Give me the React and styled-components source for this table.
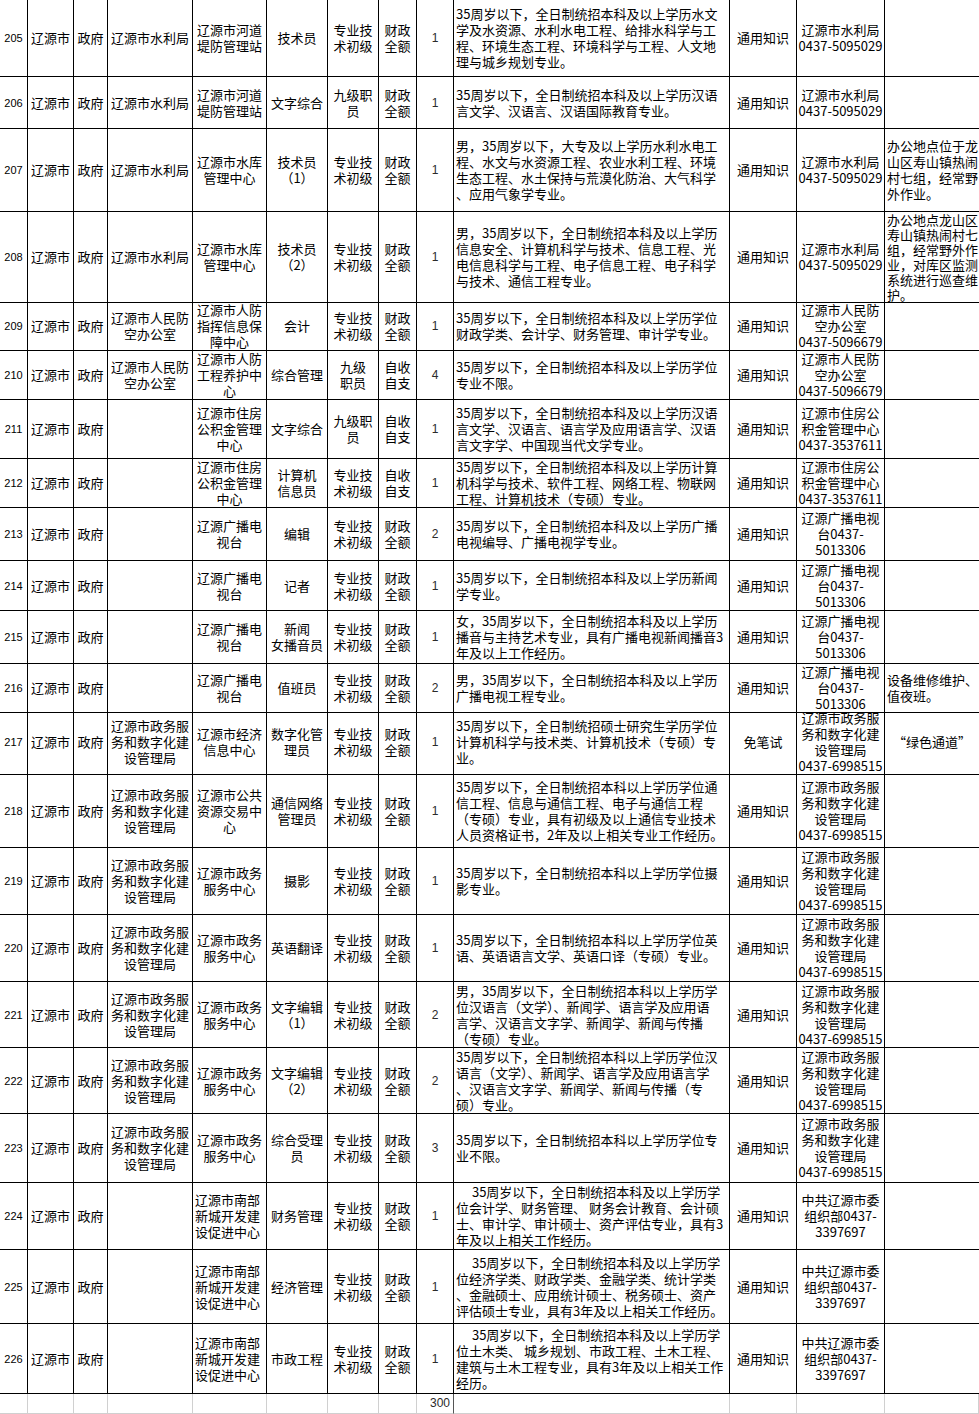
import React from 'react';
import styled, { createGlobalStyle } from 'styled-components';

const GlobalStyle = createGlobalStyle`
  html, body { margin: 0; padding: 0; background: #fff; }
  body { font-family: "Noto Sans CJK SC", sans-serif; color: #000; }
`;

const COLS = '28px 46px 34px 85px 74px 61px 51px 38px 37px 276px 67px 88px 1fr';

const Sheet = styled.div`
  width: 979px;
  overflow: hidden;
  background: #fff;
`;

const Row = styled.div`
  display: grid;
  grid-template-columns: ${COLS};
  height: ${(p) => p.$h}px;
`;

const Cell = styled.div`
  display: flex;
  flex-direction: column;
  justify-content: center;
  align-items: ${(p) => (p.$left ? 'flex-start' : 'center')};
  text-align: ${(p) => (p.$left ? 'left' : 'center')};
  padding: 0 ${(p) => (p.$left ? '0 0 2px' : '0')};
  padding-left: ${(p) => (p.$left ? 2 : 0)}px;
  border-right: ${(p) => (p.$last ? 'none' : '1px solid #000')};
  border-bottom: 1px solid #000;
  font-size: 13px;
  line-height: ${(p) => p.$lh || 16}px;
  white-space: nowrap;
  min-width: 0;
  overflow: visible;
  box-sizing: border-box;
`;

const IndexCell = styled(Cell)`
  font-family: "Liberation Sans", sans-serif;
  font-size: 11px;
`;

const CountCell = styled(Cell)`
  font-family: "Liberation Sans", sans-serif;
  font-size: 12px;
  color: #2a2a2a;
`;

const Line = styled.span`
  display: block;
`;

const FooterRow = styled.div`
  display: grid;
  grid-template-columns: ${COLS};
  height: 20px;
`;

const FooterCell = styled.div`
  border-right: 1px solid ${(p) => (p.$dark ? '#555' : '#d0d0d0')};
  border-bottom: 1px solid #d0d0d0;
  box-sizing: border-box;
  font-family: "Liberation Sans", sans-serif;
  font-size: 12px;
  line-height: 19px;
  color: #2a2a2a;
  text-align: right;
  padding-right: 3px;
`;

const WATER = '辽源市水利局';
const RF = '辽源市人民防|空办公室';
const ZW = '辽源市政务服|务和数字化建|设管理局';
const ZWC = '辽源市政务服|务和数字化建|设管理局|0437-6998515';
const TECH = '专业技|术初级';
const CZ = '财政|全额';
const ZS = '自收|自支';
const TY = '通用知识';
const GB = '辽源广播电|视台';
const GBC = '辽源广播电视|台0437-|5013306';
const ZF = '辽源市住房|公积金管理|中心';
const ZFC = '辽源市住房公|积金管理中心|0437-3537611';
const ZWZX = '辽源市政务|服务中心';
const NB = '辽源市南部|新城开发建|设促进中心';
const ZG = '中共辽源市委|组织部0437-|3397697';

const rows = [
  {
    n: '205', h: 77, dept: WATER, unit: '辽源市河道|堤防管理站', pos: '技术员', type: TECH, fund: CZ, cnt: '1',
    req: ['35周岁以下，全日制统招本科及以上学历水文', '学及水资源、水利水电工程、给排水科学与工', '程、环境生态工程、环境科学与工程、人文地', '理与城乡规划专业。'],
    exam: TY, contact: '辽源市水利局|0437-5095029', note: '',
  },
  {
    n: '206', h: 52, dept: WATER, unit: '辽源市河道|堤防管理站', pos: '文字综合', type: '九级职|员', fund: CZ, cnt: '1',
    req: ['35周岁以下，全日制统招本科及以上学历汉语', '言文学、汉语言、汉语国际教育专业。'],
    exam: TY, contact: '辽源市水利局|0437-5095029', note: '',
  },
  {
    n: '207', h: 83, dept: WATER, unit: '辽源市水库|管理中心', pos: '技术员|（1）', type: TECH, fund: CZ, cnt: '1',
    req: ['男，35周岁以下，大专及以上学历水利水电工', '程、水文与水资源工程、农业水利工程、环境', '生态工程、水土保持与荒漠化防治、大气科学', '、应用气象学专业。'],
    exam: TY, contact: '辽源市水利局|0437-5095029', note: '办公地点位于龙|山区寿山镇热闹|村七组，经常野|外作业。',
  },
  {
    n: '208', h: 90, dept: WATER, unit: '辽源市水库|管理中心', pos: '技术员|（2）', type: TECH, fund: CZ, cnt: '1',
    req: ['男，35周岁以下，全日制统招本科及以上学历', '信息安全、计算机科学与技术、信息工程、光', '电信息科学与工程、电子信息工程、电子科学', '与技术、通信工程专业。'],
    exam: TY, contact: '辽源市水利局|0437-5095029', note: '办公地点龙山区|寿山镇热闹村七|组，经常野外作|业，对库区监测|系统进行巡查维|护。', noteLh: 15,
  },
  {
    n: '209', h: 49, dept: RF, unit: '辽源市人防|指挥信息保|障中心', pos: '会计', type: TECH, fund: CZ, cnt: '1',
    req: ['35周岁以下，全日制统招本科及以上学历学位', '财政学类、会计学、财务管理、审计学专业。'],
    exam: TY, contact: '辽源市人民防|空办公室|0437-5096679', note: '',
  },
  {
    n: '210', h: 49, dept: RF, unit: '辽源市人防|工程养护中|心', pos: '综合管理', type: '九级|职员', fund: ZS, cnt: '4',
    req: ['35周岁以下，全日制统招本科及以上学历学位', '专业不限。'],
    exam: TY, contact: '辽源市人民防|空办公室|0437-5096679', note: '',
  },
  {
    n: '211', h: 59, dept: '', unit: ZF, pos: '文字综合', type: '九级职|员', fund: ZS, cnt: '1',
    req: ['35周岁以下，全日制统招本科及以上学历汉语', '言文学、汉语言、语言学及应用语言学、汉语', '言文字学、中国现当代文学专业。'],
    exam: TY, contact: ZFC, note: '',
  },
  {
    n: '212', h: 48, dept: '', unit: ZF, pos: '计算机|信息员', type: TECH, fund: ZS, cnt: '1',
    req: ['35周岁以下，全日制统招本科及以上学历计算', '机科学与技术、软件工程、网络工程、物联网', '工程、计算机技术（专硕）专业。'],
    exam: TY, contact: ZFC, note: '',
  },
  {
    n: '213', h: 54, dept: '', unit: GB, pos: '编辑', type: TECH, fund: CZ, cnt: '2',
    req: ['35周岁以下，全日制统招本科及以上学历广播', '电视编导、广播电视学专业。'],
    exam: TY, contact: GBC, note: '',
  },
  {
    n: '214', h: 50, dept: '', unit: GB, pos: '记者', type: TECH, fund: CZ, cnt: '1',
    req: ['35周岁以下，全日制统招本科及以上学历新闻', '学专业。'],
    exam: TY, contact: GBC, note: '',
  },
  {
    n: '215', h: 53, dept: '', unit: GB, pos: '新闻|女播音员', type: TECH, fund: CZ, cnt: '1',
    req: ['女，35周岁以下，全日制统招本科及以上学历', '播音与主持艺术专业，具有广播电视新闻播音3', '年及以上工作经历。'],
    exam: TY, contact: GBC, note: '',
  },
  {
    n: '216', h: 46, dept: '', unit: GB, pos: '值班员', type: TECH, fund: CZ, cnt: '2',
    req: ['男，35周岁以下，全日制统招本科及以上学历', '广播电视工程专业。'],
    exam: TY, contact: GBC, note: '设备维修维护、|值夜班。',
  },
  {
    n: '217', h: 64, dept: ZW, unit: '辽源市经济|信息中心', pos: '数字化管|理员', type: TECH, fund: CZ, cnt: '1',
    req: ['35周岁以下，全日制统招硕士研究生学历学位', '计算机科学与技术类、计算机技术（专硕）专', '业。'],
    exam: '免笔试', contact: ZWC, note: '“绿色通道”', noteCenter: true,
  },
  {
    n: '218', h: 74, dept: ZW, unit: '辽源市公共|资源交易中|心', pos: '通信网络|管理员', type: TECH, fund: CZ, cnt: '1',
    req: ['35周岁以下，全日制统招本科以上学历学位通', '信工程、信息与通信工程、电子与通信工程', '（专硕）专业，具有初级及以上通信专业技术', '人员资格证书，2年及以上相关专业工作经历。'],
    exam: TY, contact: ZWC, note: '',
  },
  {
    n: '219', h: 67, dept: ZW, unit: ZWZX, pos: '摄影', type: TECH, fund: CZ, cnt: '1',
    req: ['35周岁以下，全日制统招本科以上学历学位摄', '影专业。'],
    exam: TY, contact: ZWC, note: '',
  },
  {
    n: '220', h: 67, dept: ZW, unit: ZWZX, pos: '英语翻译', type: TECH, fund: CZ, cnt: '1',
    req: ['35周岁以下，全日制统招本科以上学历学位英', '语、英语语言文学、英语口译（专硕）专业。'],
    exam: TY, contact: ZWC, note: '',
  },
  {
    n: '221', h: 66, dept: ZW, unit: ZWZX, pos: '文字编辑|（1）', type: TECH, fund: CZ, cnt: '2',
    req: ['男，35周岁以下，全日制统招本科以上学历学', '位汉语言（文学）、新闻学、语言学及应用语', '言学、汉语言文字学、新闻学、新闻与传播', '（专硕）专业。'],
    exam: TY, contact: ZWC, note: '',
  },
  {
    n: '222', h: 66, dept: ZW, unit: ZWZX, pos: '文字编辑|（2）', type: TECH, fund: CZ, cnt: '2',
    req: ['35周岁以下，全日制统招本科以上学历学位汉', '语言（文学）、新闻学、语言学及应用语言学', '、汉语言文字学、新闻学、新闻与传播（专', '硕）专业。'],
    exam: TY, contact: ZWC, note: '',
  },
  {
    n: '223', h: 69, dept: ZW, unit: ZWZX, pos: '综合受理|员', type: TECH, fund: CZ, cnt: '3',
    req: ['35周岁以下，全日制统招本科以上学历学位专', '业不限。'],
    exam: TY, contact: ZWC, note: '',
  },
  {
    n: '224', h: 67, dept: '', unit: NB, unitLeft: true, pos: '财务管理', type: TECH, fund: CZ, cnt: '1',
    req: ['\u3000 35周岁以下，全日制统招本科及以上学历学', '位会计学、财务管理、 财务会计教育、会计硕', '士、审计学、审计硕士、资产评估专业，具有3', '年及以上相关工作经历。'],
    exam: TY, contact: ZG, note: '',
  },
  {
    n: '225', h: 74, dept: '', unit: NB, unitLeft: true, pos: '经济管理', type: TECH, fund: CZ, cnt: '1',
    req: ['\u3000 35周岁以下，全日制统招本科及以上学历学', '位经济学类、财政学类、金融学类、统计学类', '、金融硕士、应用统计硕士、税务硕士、资产', '评估硕士专业，具有3年及以上相关工作经历。'],
    exam: TY, contact: ZG, note: '',
  },
  {
    n: '226', h: 70, dept: '', unit: NB, unitLeft: true, pos: '市政工程', type: TECH, fund: CZ, cnt: '1',
    req: ['\u3000 35周岁以下，全日制统招本科及以上学历学', '位土木类、 城乡规划、市政工程、土木工程、', '建筑与土木工程专业，具有3年及以上相关工作', '经历。'],
    exam: TY, contact: ZG, note: '',
  },
];

const Lines = ({ text }) => {
  const list = Array.isArray(text) ? text : text ? text.split('|') : [];
  return list.map((t, i) => <Line key={i}>{t}</Line>);
};

const DataRow = ({ r }) => (
  <Row $h={r.h}>
    <IndexCell>{r.n}</IndexCell>
    <Cell>辽源市</Cell>
    <Cell>政府</Cell>
    <Cell><Lines text={r.dept} /></Cell>
    <Cell $left={r.unitLeft}><Lines text={r.unit} /></Cell>
    <Cell><Lines text={r.pos} /></Cell>
    <Cell><Lines text={r.type} /></Cell>
    <Cell><Lines text={r.fund} /></Cell>
    <CountCell>{r.cnt}</CountCell>
    <Cell $left><Lines text={r.req} /></Cell>
    <Cell>{r.exam}</Cell>
    <Cell><Lines text={r.contact} /></Cell>
    <Cell $last $left={!r.noteCenter} $lh={r.noteLh}><Lines text={r.note} /></Cell>
  </Row>
);

export default function App() {
  return (
    <Sheet>
      <GlobalStyle />
      {rows.map((r) => (
        <DataRow key={r.n} r={r} />
      ))}
      <FooterRow>
        {Array.from({ length: 13 }).map((_, i) => (
          <FooterCell key={i} $dark={i === 8}>{i === 8 ? '300' : ''}</FooterCell>
        ))}
      </FooterRow>
    </Sheet>
  );
}
